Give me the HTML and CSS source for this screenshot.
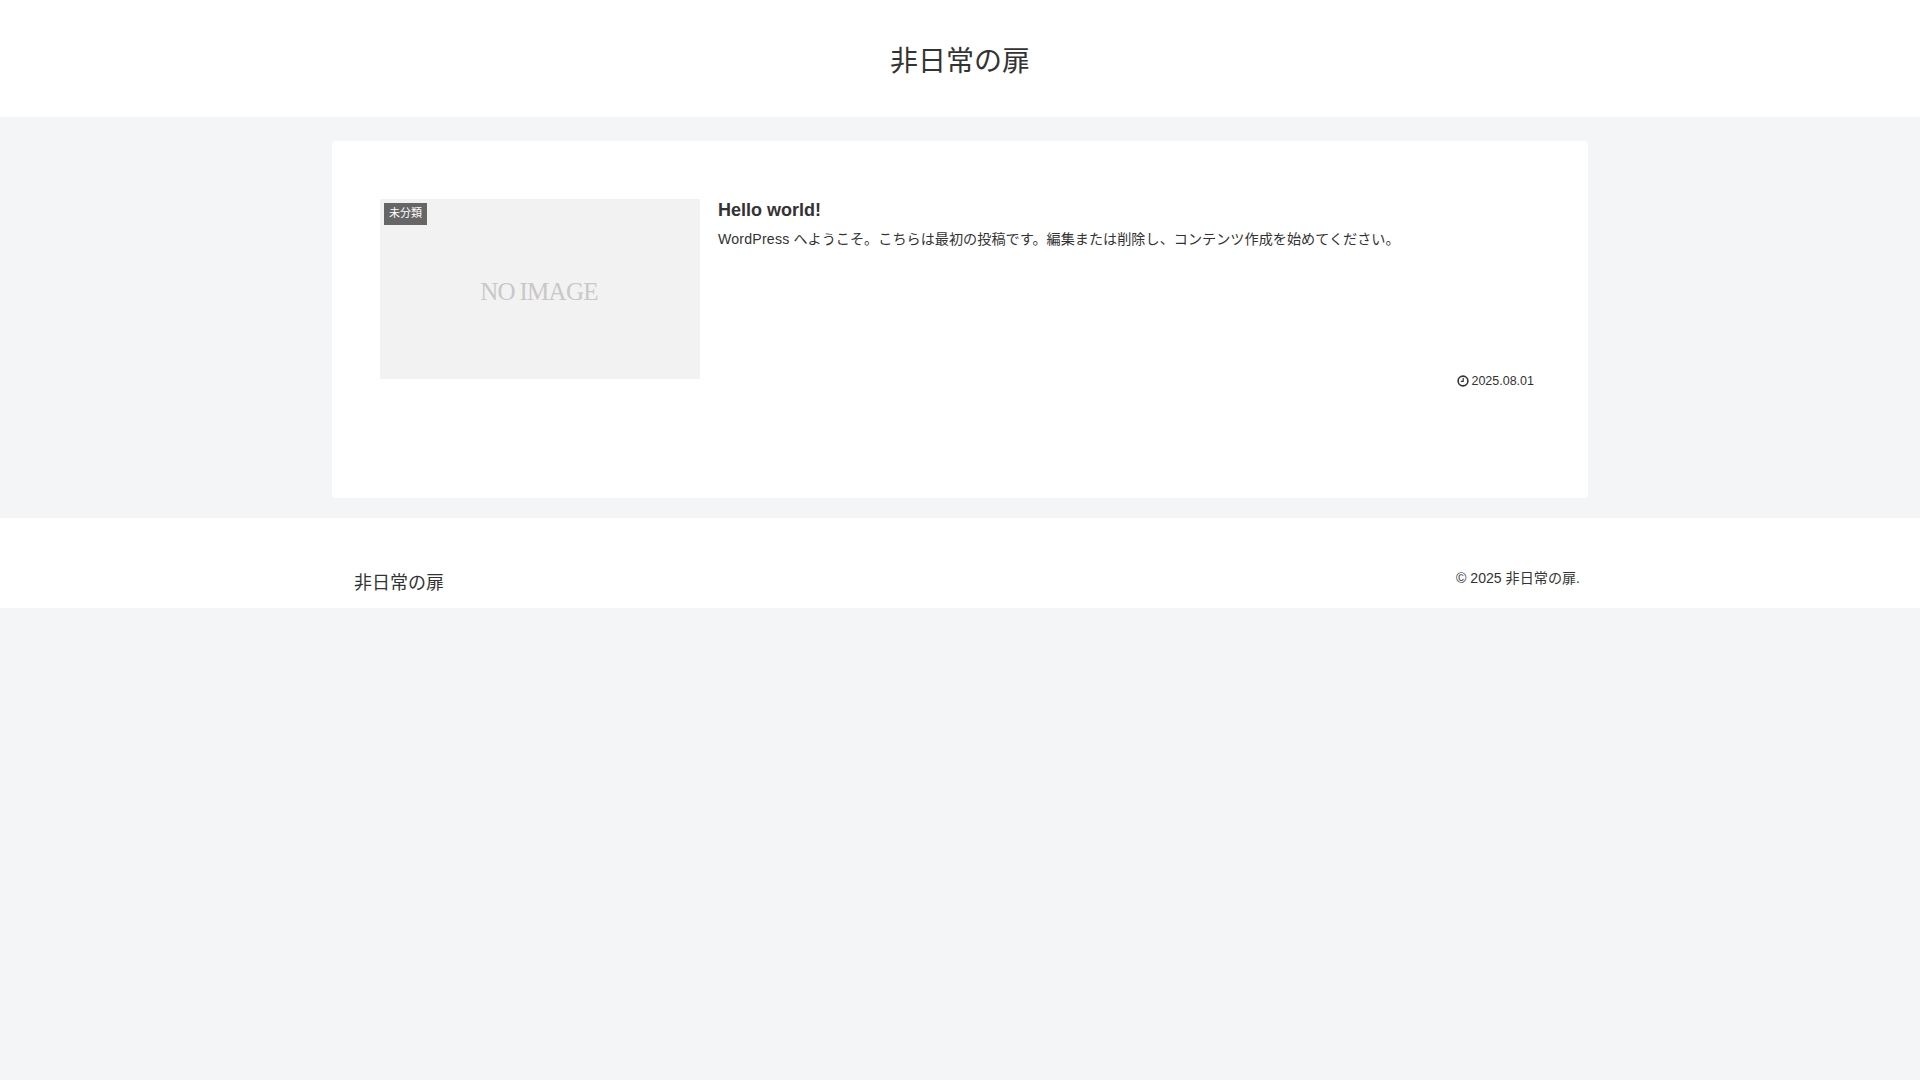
FILE: index.html
```html
<!DOCTYPE html>
<html lang="ja">
<head>
<meta charset="utf-8">
<title>非日常の扉</title>
<link rel="stylesheet" href="styles.css">
</head>
<body>
<header class="site-header">
  <a class="site-name">非日常の扉</a>
</header>
<main class="content">
  <article class="card">
    <div class="thumb">
      <span class="no-image">NO IMAGE</span>
      <span class="cat-label">未分類</span>
    </div>
    <div class="entry">
      <h2 class="entry-title">Hello world!</h2>
      <p class="snippet"><span class="latin">WordPress</span> へようこそ。こちらは最初の投稿です。編集または削除し、コンテンツ作成を始めてください。</p>
      <div class="post-date">
        <svg class="clock" viewBox="0 0 12 12" width="12" height="12" aria-hidden="true">
          <circle cx="6" cy="6" r="4.9" fill="none" stroke="#333" stroke-width="1.6"/>
          <path d="M6.2 3v3.3H3.8" fill="none" stroke="#333" stroke-width="1.2"/>
        </svg>
        <span>2025.08.01</span>
      </div>
    </div>
  </article>
</main>
<footer class="site-footer">
  <div class="footer-inner">
    <span class="footer-logo">非日常の扉</span>
    <span class="copyright">© 2025 非日常の扉.</span>
  </div>
</footer>
</body>
</html>
```
FILE: styles.css
```css
* { box-sizing: border-box; }
html, body { margin: 0; padding: 0; }
body {
  min-height: 1080px;
  background: #f4f5f7;
  color: #333;
  font-family: "Liberation Sans", "Noto Sans CJK JP", sans-serif;
  font-size: 14px;
}
.site-header {
  height: 117px;
  background: #fff;
  display: flex;
  justify-content: center;
  padding-top: 44px;
}
.site-name {
  font-size: 28px;
  line-height: 36px;
  height: 36px;
}
.content {
  width: 1256px;
  margin: 24px auto 0;
}
.card {
  height: 357px;
  background: #fff;
  border-radius: 4px;
  padding: 58px 54px 0 48px;
  display: flex;
  gap: 18px;
}
.thumb {
  position: relative;
  flex: none;
  width: 320px;
  height: 180px;
  background: #f2f2f2;
  display: flex;
  align-items: center;
  justify-content: center;
}
.no-image {
  font-family: "Liberation Serif", serif;
  font-size: 25px;
  letter-spacing: -0.7px;
  word-spacing: -1px;
  color: #c8c8c8;
  margin: 6px 0 0 -2px;
}
.cat-label {
  position: absolute;
  left: 4px;
  top: 4px;
  height: 22px;
  padding: 0 5px;
  background: #666;
  color: #fff;
  font-size: 11px;
  line-height: 20px;
}
.entry {
  flex: 1;
  display: flex;
  flex-direction: column;
  height: 191px;
}
.entry-title {
  margin: 0;
  font-size: 18px;
  line-height: 22px;
  font-weight: bold;
}
.snippet {
  margin: 8px 0 0;
  font-size: 14.15px;
  line-height: 21px;
}
.latin {
  letter-spacing: 0.2px;
}
.post-date {
  margin-top: auto;
  display: flex;
  justify-content: flex-end;
  align-items: center;
  gap: 2px;
  font-size: 12.5px;
  line-height: 18px;
}
.site-footer {
  margin-top: 20px;
  height: 90px;
  background: #fff;
}
.footer-inner {
  width: 1256px;
  margin: 0 auto;
  padding: 50px 8px 0 22px;
  display: flex;
  justify-content: space-between;
  align-items: flex-start;
}
.footer-logo {
  font-size: 18px;
  line-height: 24px;
  margin-top: 3px;
}
.copyright {
  font-size: 14.1px;
  line-height: 20px;
}
```
